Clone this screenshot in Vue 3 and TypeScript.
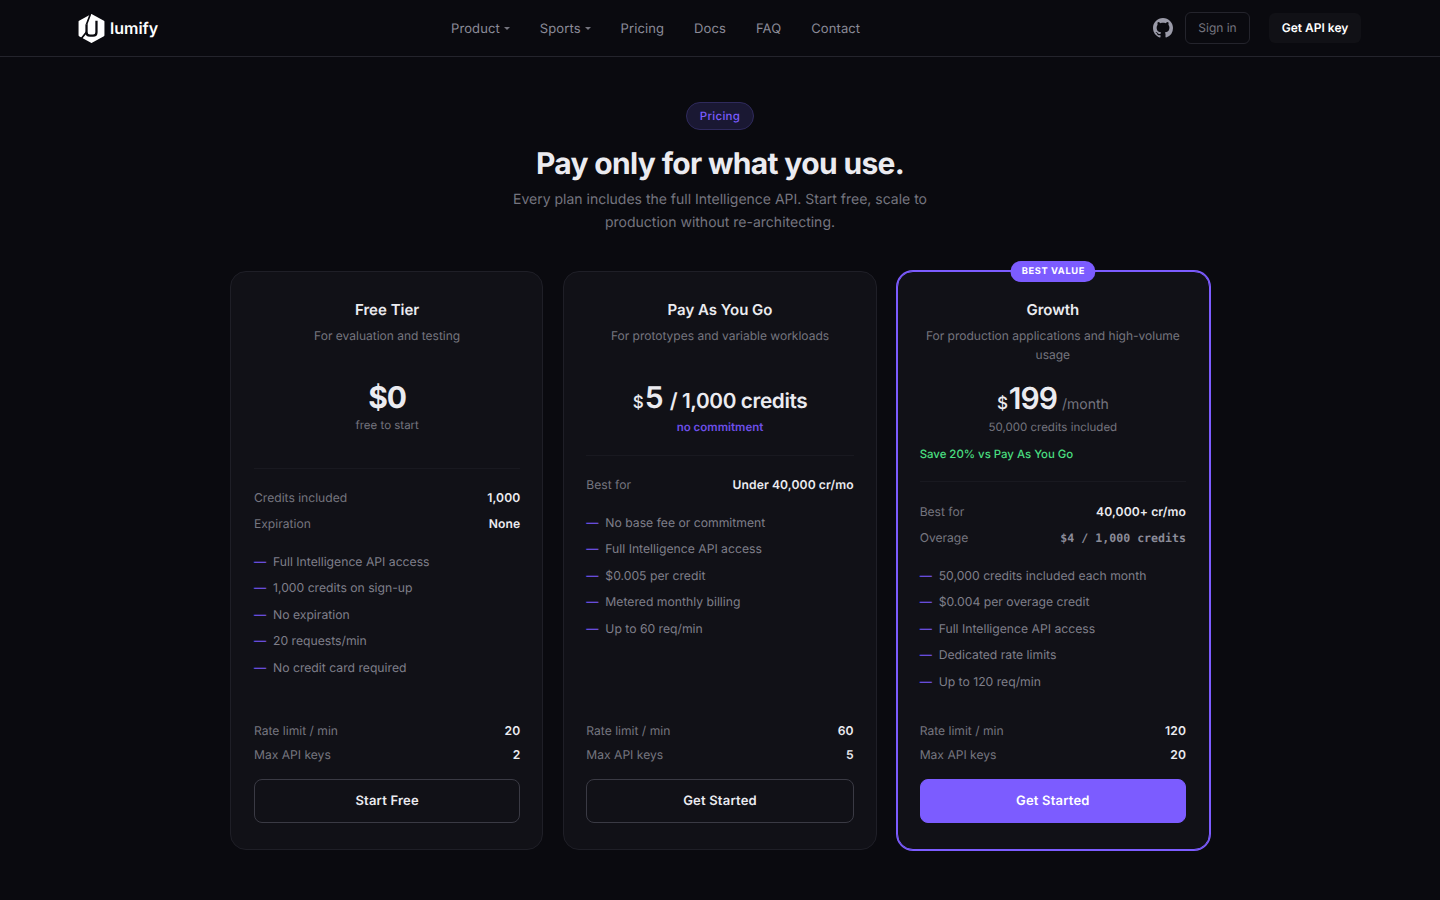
<script setup lang="ts">
interface Row {
  label: string
  value: string
  mono?: boolean
}

interface Plan {
  key: string
  name: string
  desc: string
  features: string[]
  rows: Row[]
  limits: Row[]
  cta: string
}

const navLinks = [
  { label: 'Product', caret: true },
  { label: 'Sports', caret: true },
  { label: 'Pricing', caret: false },
  { label: 'Docs', caret: false },
  { label: 'FAQ', caret: false },
  { label: 'Contact', caret: false },
]

const plans: Plan[] = [
  {
    key: 'free',
    name: 'Free Tier',
    desc: 'For evaluation and testing',
    rows: [
      { label: 'Credits included', value: '1,000' },
      { label: 'Expiration', value: 'None' },
    ],
    features: [
      'Full Intelligence API access',
      '1,000 credits on sign-up',
      'No expiration',
      '20 requests/min',
      'No credit card required',
    ],
    limits: [
      { label: 'Rate limit / min', value: '20' },
      { label: 'Max API keys', value: '2' },
    ],
    cta: 'Start Free',
  },
  {
    key: 'payg',
    name: 'Pay As You Go',
    desc: 'For prototypes and variable workloads',
    rows: [{ label: 'Best for', value: 'Under 40,000 cr/mo' }],
    features: [
      'No base fee or commitment',
      'Full Intelligence API access',
      '$0.005 per credit',
      'Metered monthly billing',
      'Up to 60 req/min',
    ],
    limits: [
      { label: 'Rate limit / min', value: '60' },
      { label: 'Max API keys', value: '5' },
    ],
    cta: 'Get Started',
  },
  {
    key: 'growth',
    name: 'Growth',
    desc: 'For production applications and high-volume usage',
    rows: [
      { label: 'Best for', value: '40,000+ cr/mo' },
      { label: 'Overage', value: '$4 / 1,000 credits', mono: true },
    ],
    features: [
      '50,000 credits included each month',
      '$0.004 per overage credit',
      'Full Intelligence API access',
      'Dedicated rate limits',
      'Up to 120 req/min',
    ],
    limits: [
      { label: 'Rate limit / min', value: '120' },
      { label: 'Max API keys', value: '20' },
    ],
    cta: 'Get Started',
  },
]
</script>

<template>
  <div class="page">
    <header class="nav">
      <div class="brand">
        <svg class="logo" viewBox="0 0 26 28" width="27" height="29" aria-hidden="true">
          <path d="M13 1 L24.5 7.5 V20.5 L13 27 L1.5 20.5 V7.5 Z" fill="#fff" stroke="#fff" stroke-width="2" stroke-linejoin="round" />
          <path d="M8.2 10 V17.5 Q8.2 20.8 11.5 20.8 H14.5 Q17.8 20.8 17.8 17.5 V6.5" fill="none" stroke="#0a0a0f" stroke-width="2.2" />
          <path d="M12 0 L8.2 10 M8.2 17.5 L3 24" fill="none" stroke="#0a0a0f" stroke-width="1.6" />
        </svg>
        <span class="wordmark">lumify</span>
      </div>
      <nav class="links">
        <a v-for="link in navLinks" :key="link.label" class="link">
          {{ link.label }}<i v-if="link.caret" class="caret"></i>
        </a>
      </nav>
      <div class="actions">
        <svg class="github" viewBox="0 0 16 16" width="20" height="20" aria-hidden="true">
          <path d="M8 0C3.58 0 0 3.58 0 8c0 3.54 2.29 6.53 5.47 7.59.4.07.55-.17.55-.38 0-.19-.01-.82-.01-1.49-2.01.37-2.53-.49-2.69-.94-.09-.23-.48-.94-.82-1.13-.28-.15-.68-.52-.01-.53.63-.01 1.08.58 1.23.82.72 1.21 1.87.87 2.33.66.07-.52.28-.87.51-1.07-1.78-.2-3.64-.89-3.64-3.95 0-.87.31-1.59.82-2.15-.08-.2-.36-1.02.08-2.12 0 0 .67-.21 2.2.82.64-.18 1.32-.27 2-.27s1.36.09 2 .27c1.53-1.04 2.2-.82 2.2-.82.44 1.1.16 1.92.08 2.12.51.56.82 1.27.82 2.15 0 3.07-1.87 3.75-3.65 3.95.29.25.54.73.54 1.48 0 1.07-.01 1.93-.01 2.2 0 .21.15.46.55.38A8.01 8.01 0 0 0 16 8c0-4.42-3.58-8-8-8z" fill="currentColor" />
        </svg>
        <button class="sign-in">Sign in</button>
        <button class="api-key">Get API key</button>
      </div>
    </header>

    <main class="main">
      <section class="hero">
        <span class="pill">Pricing</span>
        <h1>Pay only for what you use.</h1>
        <p>Every plan includes the full Intelligence API. Start free, scale to production without re-architecting.</p>
      </section>

      <section class="grid">
        <article v-for="plan in plans" :key="plan.key" class="card" :class="plan.key">
          <span v-if="plan.key === 'growth'" class="badge">BEST VALUE</span>
          <h2>{{ plan.name }}</h2>
          <p class="desc">{{ plan.desc }}</p>

          <div class="price">
            <template v-if="plan.key === 'free'">
              <div class="amount"><span class="big bold">$0</span></div>
              <div class="sub">free to start</div>
            </template>
            <template v-else-if="plan.key === 'payg'">
              <div class="amount">
                <span class="cur">$</span><span class="big">5</span><span class="per">/ 1,000 credits</span>
              </div>
              <div class="sub accent">no commitment</div>
            </template>
            <template v-else>
              <div class="amount">
                <span class="cur">$</span><span class="big">199</span><span class="month">/month</span>
              </div>
              <div class="sub">50,000 credits included</div>
              <div class="save">Save 20% vs Pay As You Go</div>
            </template>
          </div>

          <div class="rows">
            <div v-for="row in plan.rows" :key="row.label" class="row">
              <span>{{ row.label }}</span>
              <strong :class="{ mono: row.mono }">{{ row.value }}</strong>
            </div>
          </div>

          <ul class="features">
            <li v-for="feature in plan.features" :key="feature">{{ feature }}</li>
          </ul>

          <div class="limits">
            <div v-for="row in plan.limits" :key="row.label" class="row">
              <span>{{ row.label }}</span>
              <strong>{{ row.value }}</strong>
            </div>
          </div>

          <button class="cta">{{ plan.cta }}</button>
        </article>
      </section>
    </main>
  </div>
</template>

<style>
html,
body {
  margin: 0;
  background: #0a0a0f;
}
</style>

<style scoped>
.page {
  min-height: 900px;
  background: #0a0a0f;
  color: #ebebf0;
  font-family: Inter, "Liberation Sans", sans-serif;
  text-rendering: geometricPrecision;
}

.nav {
  height: 56px;
  display: flex;
  align-items: center;
  padding: 0 79px 0 78px;
  border-bottom: 1px solid #24242c;
}

.brand {
  display: flex;
  align-items: center;
  gap: 5px;
}

.logo {
  display: block;
}

.wordmark {
  font-size: 16px;
  font-weight: 600;
  color: #fff;
}

.links {
  flex: 1;
  display: flex;
  align-items: center;
  justify-content: center;
  gap: 30px;
}

.link {
  padding-top: 1px;
  font-size: 13px;
  letter-spacing: 0.1px;
  color: #8b8b98;
  display: flex;
  align-items: center;
}

.caret {
  width: 0;
  height: 0;
  margin-left: 4px;
  border-left: 3px solid transparent;
  border-right: 3px solid transparent;
  border-top: 3px solid #75757f;
}

.actions {
  display: flex;
  align-items: center;
}

.github {
  color: #9a9aa8;
  margin-right: 12px;
}

.sign-in {
  height: 32px;
  width: 65px;
  padding: 0 0 2px;
  background: transparent;
  border: 1px solid #24242c;
  border-radius: 6px;
  color: #75757f;
  font: 400 12px Inter, sans-serif;
  text-rendering: geometricPrecision;
}

.api-key {
  height: 30px;
  width: 92px;
  margin-left: 19px;
  padding: 0 0 1px;
  background: #111116;
  border: none;
  border-radius: 6px;
  color: #fff;
  font: 600 12px Inter, sans-serif;
  text-rendering: geometricPrecision;
}

.main {
  width: 980px;
  margin: 0 auto;
}

.hero {
  padding-top: 45px;
  display: flex;
  flex-direction: column;
  align-items: center;
}

.pill {
  height: 26px;
  line-height: 26px;
  padding: 0 13px;
  border: 1px solid #2f2a5c;
  border-radius: 14px;
  background: #1a1833;
  color: #7c5cff;
  font-size: 11.5px;
  font-weight: 500;
  letter-spacing: 0.3px;
}

.hero h1 {
  margin: 15px 0 0;
  font-size: 30px;
  line-height: 38px;
  font-weight: 700;
  letter-spacing: -0.67px;
}

.hero p {
  width: 440px;
  margin: 5px 0 0;
  font-size: 14px;
  line-height: 23px;
  text-align: center;
  color: #75757f;
}

.grid {
  display: grid;
  grid-template-columns: repeat(3, 1fr);
  gap: 20px;
  margin-top: 37px;
}

.card {
  position: relative;
  height: 579px;
  box-sizing: border-box;
  padding: 27px 22px 26px;
  display: flex;
  flex-direction: column;
  background: #111117;
  border: 1px solid #1f1f27;
  border-radius: 16px;
}

.card.free {
  padding-left: 23px;
}

.card.growth {
  padding-right: 23px;
  border-color: #7c5cff;
  box-shadow: 0 0 0 1px #7c5cff;
}

.badge {
  position: absolute;
  top: -11px;
  left: 50%;
  transform: translateX(-50%);
  height: 21px;
  line-height: 22px;
  padding: 0 11px;
  border-radius: 11px;
  background: #7c5cff;
  color: #fff;
  font-size: 9.3px;
  font-weight: 700;
  letter-spacing: 0.6px;
  white-space: nowrap;
}

.card h2 {
  margin: 0;
  font-size: 15px;
  line-height: 22px;
  font-weight: 600;
  text-align: center;
}

.desc {
  height: 38px;
  margin: 5px 0 0;
  font-size: 12px;
  line-height: 19px;
  text-align: center;
  color: #75757f;
}

.price {
  margin-top: 13px;
  text-align: center;
  border-bottom: 1px solid #191920;
}

.free .price {
  height: 91px;
}

.free .sub {
  margin-top: -2px;
}

.payg .price {
  height: 78px;
}

.growth .price {
  height: 104px;
}

.amount {
  height: 41px;
  display: flex;
  align-items: baseline;
  justify-content: center;
  line-height: 42px;
}

.growth .amount {
  height: 40px;
  margin-top: 1px;
}

.big {
  font-size: 30px;
  font-weight: 600;
  letter-spacing: -1px;
}

.big.bold {
  font-weight: 700;
}

.cur {
  font-size: 17px;
  font-weight: 500;
  margin-right: 1px;
}

.per {
  margin-left: 7px;
  font-size: 20.8px;
  font-weight: 600;
  letter-spacing: -0.4px;
}

.month {
  margin-left: 5px;
  font-size: 14px;
  color: #75757f;
}

.sub {
  font-size: 11.5px;
  line-height: 18px;
  color: #75757f;
}

.sub.accent {
  font-size: 11.5px;
  font-weight: 600;
  color: #6d4fe8;
}

.save {
  margin-top: 9px;
  font-size: 11.4px;
  line-height: 18px;
  font-weight: 500;
  text-align: left;
  color: #4ade80;
}

.rows {
  margin-top: 20px;
  display: flex;
  flex-direction: column;
  gap: 8px;
}

.growth .rows {
  margin-top: 21px;
}

.row {
  display: flex;
  justify-content: space-between;
  font-size: 12.1px;
  line-height: 18px;
  color: #75757f;
}

.row strong {
  font-weight: 600;
  letter-spacing: 0.1px;
  color: #ebebf0;
}

.row strong.mono {
  font-family: "DejaVu Sans Mono", "Liberation Mono", monospace;
  font-size: 11.6px;
  letter-spacing: 0;
  color: #8b8b98;
}

.features {
  list-style: none;
  margin: 20px 0 0;
  padding: 0;
  display: flex;
  flex-direction: column;
  gap: 8.4px;
}

.features li {
  display: flex;
  align-items: center;
  gap: 7px;
  font-size: 12.2px;
  line-height: 18px;
  color: #7f7f8a;
}

.features li::before {
  content: "—";
  flex: none;
  width: 12px;
  color: #7c5cff;
}

.limits {
  margin-top: auto;
  display: flex;
  flex-direction: column;
  gap: 6px;
}

.cta {
  height: 44px;
  margin-top: 15px;
  padding: 0;
  background: transparent;
  border: 1px solid #3a3a44;
  border-radius: 8px;
  color: #ebebf0;
  font: 600 13px Inter, sans-serif;
  letter-spacing: 0.2px;
  text-rendering: geometricPrecision;
}

.growth .cta {
  background: #7c5cff;
  border-color: #7c5cff;
  color: #fff;
}
</style>
